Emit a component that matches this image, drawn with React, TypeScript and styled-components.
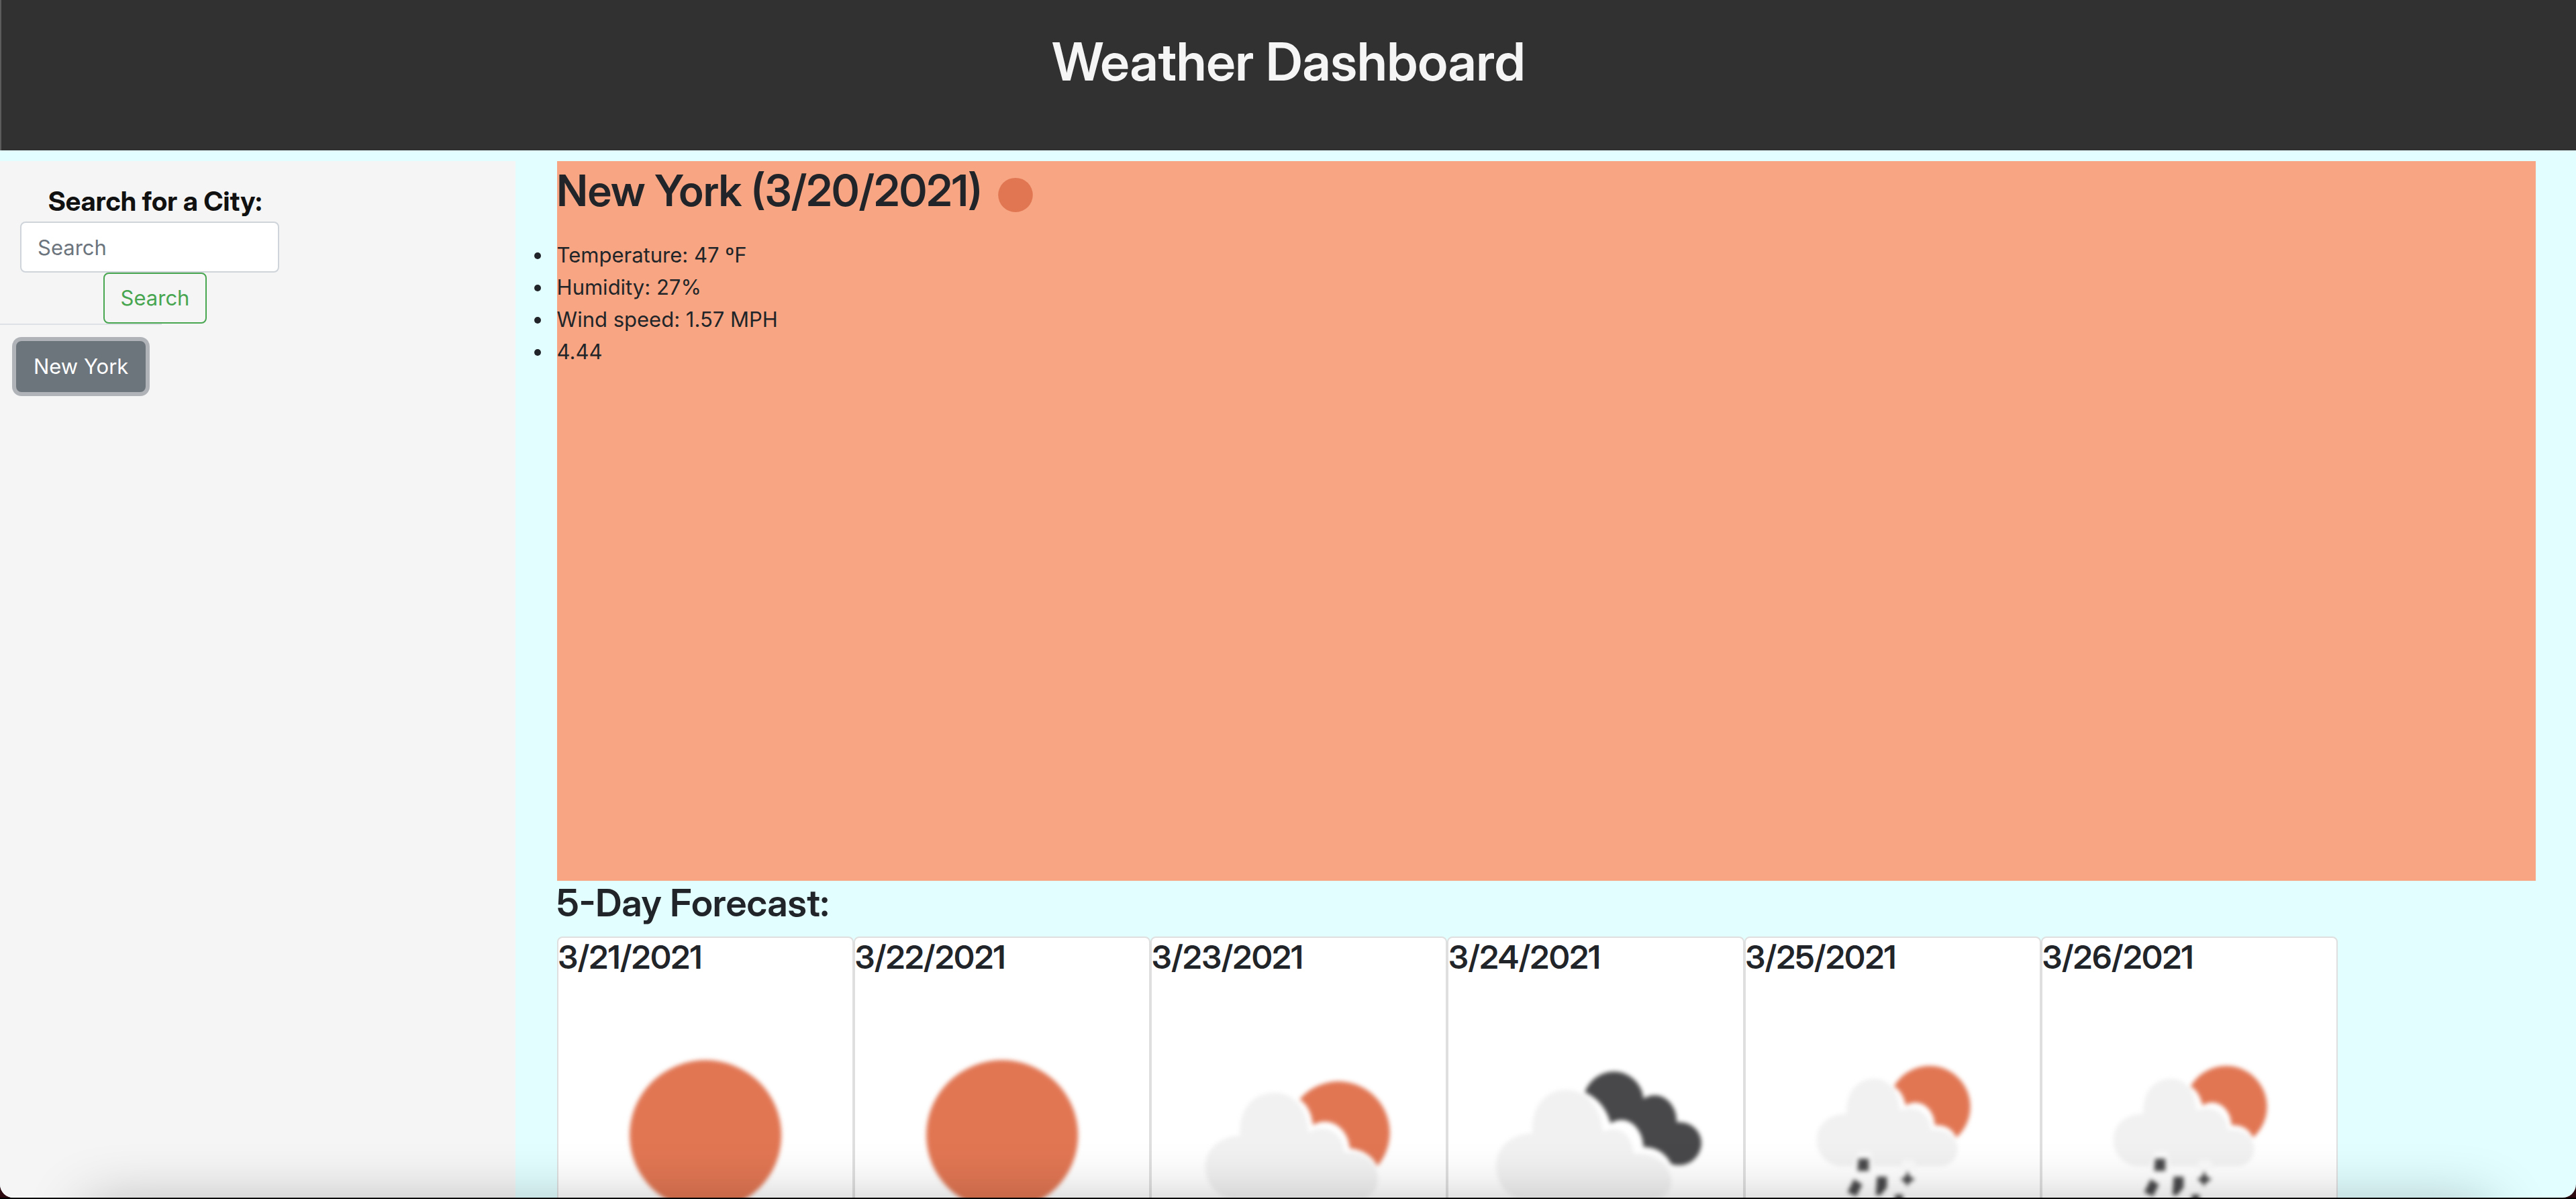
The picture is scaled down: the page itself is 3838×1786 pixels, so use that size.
import React from "react";
import styled, { createGlobalStyle } from "styled-components";

const textFont = `Inter, "Liberation Sans", sans-serif`;
const displayFont = `"Inter Display", Inter, "Liberation Sans", sans-serif`;

const GlobalStyle = createGlobalStyle`
  *, *::before, *::after { box-sizing: border-box; }
  body {
    margin: 0;
    background: #000;
    color: #212529;
    font-family: ${textFont};
    font-size: 31px;
    line-height: 48px;
  }
`;

const Desktop = styled.div`
  height: 100vh;
  padding-bottom: 2px;
  overflow: hidden;
  background: linear-gradient(#2c0a10, #2c0a10) top / 100% calc(100% - 2px) no-repeat #000;
`;

const Window = styled.div`
  position: relative;
  display: flex;
  flex-direction: column;
  height: 100%;
  overflow: hidden;
  border-radius: 0 0 20px 20px;
  background: #e2feff;

  &::after {
    content: "";
    position: absolute;
    top: calc(100% + 14px);
    left: 130px;
    right: 130px;
    height: 200px;
    box-shadow: 0 0 90px rgba(0, 0, 0, 0.3);
    pointer-events: none;
  }
`;

const Header = styled.header`
  flex: none;
  height: 224px;
  padding-top: 45px;
  margin-bottom: 16px;
  border-left: 2px solid #5c5c5c;
  background: #313131;
  color: #f5f5f5;
  text-align: center;
`;

const Heading = styled.h1<{ $size: number; $gap?: number }>`
  margin: 0 0 ${(p) => p.$gap ?? 0}px;
  font-family: ${displayFont};
  font-size: ${(p) => p.$size}px;
  font-weight: 600;
  line-height: 1.2;
`;

const Columns = styled.div`
  flex: 1;
  display: flex;
  min-height: 0;
`;

const Sidebar = styled.aside`
  flex: none;
  width: 20%;
  background: #f5f5f5;
`;

const SearchForm = styled.form`
  display: flex;
  flex-direction: column;
  align-items: center;
  width: fit-content;
  padding: 30px 30px 0;
`;

const SearchLabel = styled.label`
  color: #111;
  font-family: ${displayFont};
  font-size: 40px;
  font-weight: 700;
  line-height: 60px;
`;

const SearchInput = styled.input`
  width: 386px;
  height: 76px;
  margin-right: 16px;
  padding: 12px 24px;
  border: 2px solid #ced4da;
  border-radius: 8px;
  background: #fff;
  color: #495057;
  font: inherit;

  &::placeholder {
    color: #6c757d;
    opacity: 1;
  }
`;

const Button = styled.button<{ $kind: "outline" | "solid" }>`
  padding: 12px 24px;
  border: 2px solid ${(p) => (p.$kind === "outline" ? "#48a651" : "#6d757c")};
  border-radius: 8px;
  background: ${(p) => (p.$kind === "outline" ? "transparent" : "#6d757c")};
  box-shadow: ${(p) => (p.$kind === "outline" ? "none" : "0 0 0 6px #b0b4b8")};
  color: ${(p) => (p.$kind === "outline" ? "#48a651" : "#fff")};
  font: inherit;
`;

const History = styled.div`
  width: fit-content;
  padding: 24px;
  border-top: 2px solid #dee2e6;
`;

const Main = styled.main`
  flex: 1;
  min-width: 0;
  margin: 0 60px 0 62px;
`;

const Current = styled.section`
  height: 60vh;
  background: #f7a582;
`;

const Facts = styled.ul`
  margin: 0;
  padding: 0;
  list-style: none;
`;

const Fact = styled.li`
  position: relative;

  &::before {
    content: "";
    position: absolute;
    top: 20px;
    left: -34px;
    width: 10px;
    height: 10px;
    border-radius: 50%;
    background: currentColor;
  }
`;

const Forecast = styled.div`
  display: flex;
`;

const Card = styled.article`
  width: 15%;
  border: 2px solid #dfdfdf;
  border-radius: 8px;
  background: #fff;
`;

const SmallIcon = styled.svg`
  width: 100px;
  height: 100px;
  vertical-align: middle;
`;

const LargeIcon = styled.svg`
  display: block;
  width: 100%;
  aspect-ratio: 1;
  filter: blur(3px);
`;

type Sky = "clear" | "fewClouds" | "broken" | "rain";

const SUN = "#e17653";
const CLOUD = "#f1f1f1";
const DARK = "#48484a";

function SkyShapes({ sky }: { sky: Sky }) {
  if (sky === "clear") return <ellipse cx="50" cy="50.4" rx="25.8" ry="25.5" fill={SUN} />;
  if (sky === "fewClouds")
    return (
      <>
        <path
          fill={SUN}
          d="M50.3 38.2A17.4 17.4 0 1 1 76.7 60.9C75 57.2 71.5 55.3 67.3 54.8C66.8 48 60.5 43.6 54.8 47C54.4 43 53 40 50.3 38.2Z"
        />
        <path
          fill={CLOUD}
          d="M27.5 72C22 71.5 18.2 66.5 18.2 61C18.2 55.2 23.5 50.6 30 50.6C29.5 42 34 36 41.9 36C48.5 36 53 42 53.3 49.5C58 46.5 65 48.5 65.5 56.4C71.5 55.5 76.9 59.8 76.9 65C76.9 69 74 72 70.5 72Z"
        />
      </>
    );
  if (sky === "broken")
    return (
      <>
        <path
          fill={DARK}
          d="M46.4 35.8C48 31.5 52 28.8 56.3 28.8C61.5 28.8 66 33 66.3 38C72 34.5 77.8 39.5 77.6 46C82.3 45.5 86 49 86 53C86 57.3 82.5 60.6 78.5 60.6C77.5 60.6 76.5 60.5 75.7 60.1C74 56.5 70.5 54.4 66.3 54.4C66 47.5 60.5 43 55.1 46.4C54 41.5 50.5 37.5 46.4 35.8Z"
        />
        <path
          fill={CLOUD}
          d="M25 72C20 71.5 16.2 66.5 16.2 60.9C16.2 54.5 21.5 49.8 28.6 49.8C27.8 41 33 35 39.9 35C47.5 35 51.8 41.5 52.6 49.2C57.5 46.8 62.5 49.5 63 56.8C70.5 56 75.8 61 75.8 66C75.8 69.5 73 72 69.5 72Z"
        />
      </>
    );
  return (
    <>
      <path
        fill={SUN}
        d="M50.4 33.8A13.9 13.9 0 1 1 71.6 51.2C70.2 48 67.5 46.8 64.3 47C64 41 59 37.5 54.4 40.3C53.8 37.3 52.5 35 50.4 33.8Z"
      />
      <path
        fill={CLOUD}
        d="M33 61C28 61 24.1 57 24.1 52C24.1 47 28.5 43 34.3 43.2C33.8 36 38 31.2 43.6 31.2C48.8 31.2 52 35.5 52.4 42C57.5 40 62.5 42.5 63 48.6C68 48 72 51 72 55C72 58.5 69.5 61 66 61Z"
      />
      <path fill="#fafafa" d="M36 62L38.5 56H42.5L43.5 62ZM52 62L53.5 59H57L58.5 62Z" />
      <path
        fill={DARK}
        d="M38.3 58.4H41.8V62.6H38ZM44.6 64.5H48V68.2L45.8 70.8H44.2ZM55 62.5L55.9 64.6L57.6 65.3L55.6 66.6L55 67.8L54.2 66.6L52.6 65.3L54.2 64.6ZM36.8 65.4L39.6 67.2L37.6 71.2L34.6 69.8ZM50.8 70.6H53.4V73.6L50.4 75.4Z"
      />
    </>
  );
}

const facts = ["Temperature: 47 ºF", "Humidity: 27%", "Wind speed: 1.57 MPH", "4.44"];

const days: { date: string; sky: Sky }[] = [
  { date: "3/21/2021", sky: "clear" },
  { date: "3/22/2021", sky: "clear" },
  { date: "3/23/2021", sky: "fewClouds" },
  { date: "3/24/2021", sky: "broken" },
  { date: "3/25/2021", sky: "rain" },
  { date: "3/26/2021", sky: "rain" },
];

export default function App() {
  return (
    <Desktop>
      <GlobalStyle />
      <Window>
        <Header>
          <Heading $size={78}>Weather Dashboard</Heading>
        </Header>
        <Columns>
          <Sidebar>
            <SearchForm onSubmit={(e) => e.preventDefault()}>
              <SearchLabel htmlFor="city">Search for a City:</SearchLabel>
              <SearchInput id="city" type="search" placeholder="Search" />
              <Button $kind="outline" type="submit">Search</Button>
            </SearchForm>
            <History>
              <Button $kind="solid" type="button">New York</Button>
            </History>
          </Sidebar>
          <Main>
            <Current>
              <Heading as="h2" $size={64} $gap={16}>
                New York (3/20/2021)
                <SmallIcon viewBox="0 0 100 100" aria-hidden="true">
                  <SkyShapes sky="clear" />
                </SmallIcon>
              </Heading>
              <Facts>
                {facts.map((fact) => (
                  <Fact key={fact}>{fact}</Fact>
                ))}
              </Facts>
            </Current>
            <Heading as="h3" $size={56} $gap={16}>5-Day Forecast:</Heading>
            <Forecast>
              {days.map((day) => (
                <Card key={day.date}>
                  <Heading as="h4" $size={48} $gap={16}>{day.date}</Heading>
                  <LargeIcon viewBox="0 0 100 100" aria-hidden="true">
                    <SkyShapes sky={day.sky} />
                  </LargeIcon>
                </Card>
              ))}
            </Forecast>
          </Main>
        </Columns>
      </Window>
    </Desktop>
  );
}
